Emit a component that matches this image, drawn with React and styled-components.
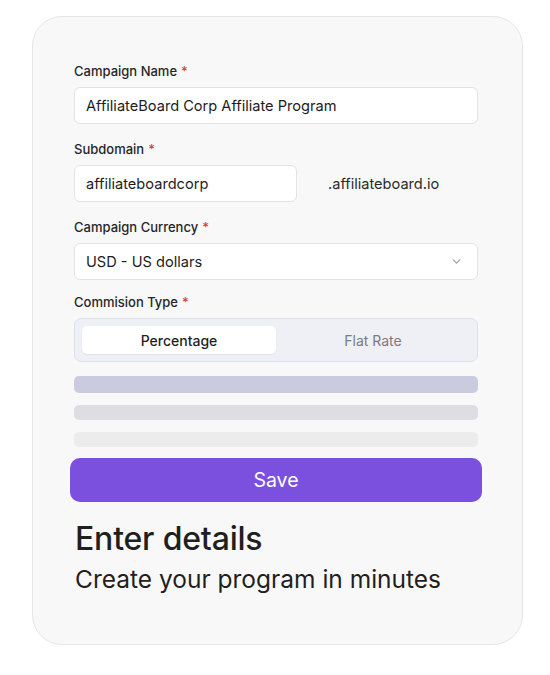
import React from "react";
import styled, { createGlobalStyle } from "styled-components";

const Global = createGlobalStyle`
  html, body { margin: 0; padding: 0; background: #ffffff; }
  body { font-family: Inter, "Noto Sans", sans-serif; color: #1f1f1f; }
  * { box-sizing: border-box; }
`;

const Card = styled.div`
  margin: 16px 0 0 32px;
  width: 491px;
  height: 629px;
  border: 1px solid #e6e6e6;
  border-radius: 30px;
  background: #f8f8f8;
  padding: 46px 44px 0 41px;
  display: flex;
  flex-direction: column;
`;

const Field = styled.div`
  display: flex;
  flex-direction: column;
  gap: 7px;
  margin-bottom: ${(p) => p.$mb ?? 17}px;
`;

const Label = styled.label`
  font-size: 13px;
  font-weight: 500;
  color: #262626;
  line-height: 17px;
`;

const Req = styled.span`
  color: #d0423e;
  margin-left: 4px;
`;

const Input = styled.div`
  height: 37px;
  width: ${(p) => p.$w || "100%"};
  background: #ffffff;
  border: 1px solid #e3e3e3;
  border-radius: 6px;
  display: flex;
  align-items: center;
  justify-content: space-between;
  padding: 0 14px 0 11px;
  font-size: 14.6px;
  color: #1c1c1c;
`;

const Row = styled.div`
  display: flex;
  align-items: center;
  gap: 31px;
`;

const Suffix = styled.span`
  font-size: 14.6px;
  color: #2a2a2a;
`;

const Segmented = styled.div`
  height: 44px;
  background: #eff0f6;
  border: 1px solid #dfe1ea;
  border-radius: 7px;
  padding: 7px;
  display: grid;
  grid-template-columns: 1fr 1fr;
`;

const Seg = styled.div`
  display: flex;
  align-items: center;
  justify-content: center;
  border-radius: 5px;
  font-size: 14px;
  font-weight: ${(p) => (p.$active ? 500 : 400)};
  color: ${(p) => (p.$active ? "#1f1f1f" : "#7a7a80")};
  background: ${(p) => (p.$active ? "#ffffff" : "transparent")};
  box-shadow: ${(p) => (p.$active ? "0 1px 2px rgba(0,0,0,0.06)" : "none")};
`;

const Bars = styled.div`
  display: flex;
  flex-direction: column;
  gap: 12px;
  margin-top: 14px;
`;

const Bar = styled.div`
  height: ${(p) => p.$h}px;
  border-radius: 5px;
  background: ${(p) => p.$c};
`;

const SaveButton = styled.button`
  margin: 11px -4px 0 -4px;
  height: 44px;
  border: none;
  border-radius: 10px;
  background: #7b50df;
  color: #ffffff;
  font-family: inherit;
  font-size: 19.5px;
  font-weight: 400;
`;

const Heading = styled.h1`
  margin: 18px 0 0 1px;
  font-size: 32px;
  font-weight: 500;
  line-height: 38px;
  color: #1f1f1f;
  letter-spacing: -0.2px;
`;

const Sub = styled.p`
  margin: 6px 0 0 1px;
  font-size: 24.5px;
  font-weight: 400;
  line-height: 30px;
  color: #1f1f1f;
`;

const Chevron = () => (
  <svg width="13" height="13" viewBox="0 0 24 24" fill="none" stroke="#a3a3a3" strokeWidth="2.5" strokeLinecap="round" strokeLinejoin="round">
    <path d="M6 9l6 6 6-6" />
  </svg>
);

export default function App() {
  return (
    <>
      <Global />
      <Card>
        <Field>
          <Label>Campaign Name<Req>*</Req></Label>
          <Input>AffiliateBoard Corp Affiliate Program</Input>
        </Field>
        <Field>
          <Label>Subdomain<Req>*</Req></Label>
          <Row>
            <Input $w="223px">affiliateboardcorp</Input>
            <Suffix>.affiliateboard.io</Suffix>
          </Row>
        </Field>
        <Field $mb={14}>
          <Label>Campaign Currency<Req>*</Req></Label>
          <Input>
            USD - US dollars
            <Chevron />
          </Input>
        </Field>
        <Field $mb={0}>
          <Label>Commision Type<Req>*</Req></Label>
          <Segmented>
            <Seg $active>Percentage</Seg>
            <Seg>Flat Rate</Seg>
          </Segmented>
        </Field>
        <Bars>
          <Bar $h={17} $c="#cbcbe0" />
          <Bar $h={15} $c="#dfdde4" />
          <Bar $h={15} $c="#ececec" />
        </Bars>
        <SaveButton>Save</SaveButton>
        <Heading>Enter details</Heading>
        <Sub>Create your program in minutes</Sub>
      </Card>
    </>
  );
}
